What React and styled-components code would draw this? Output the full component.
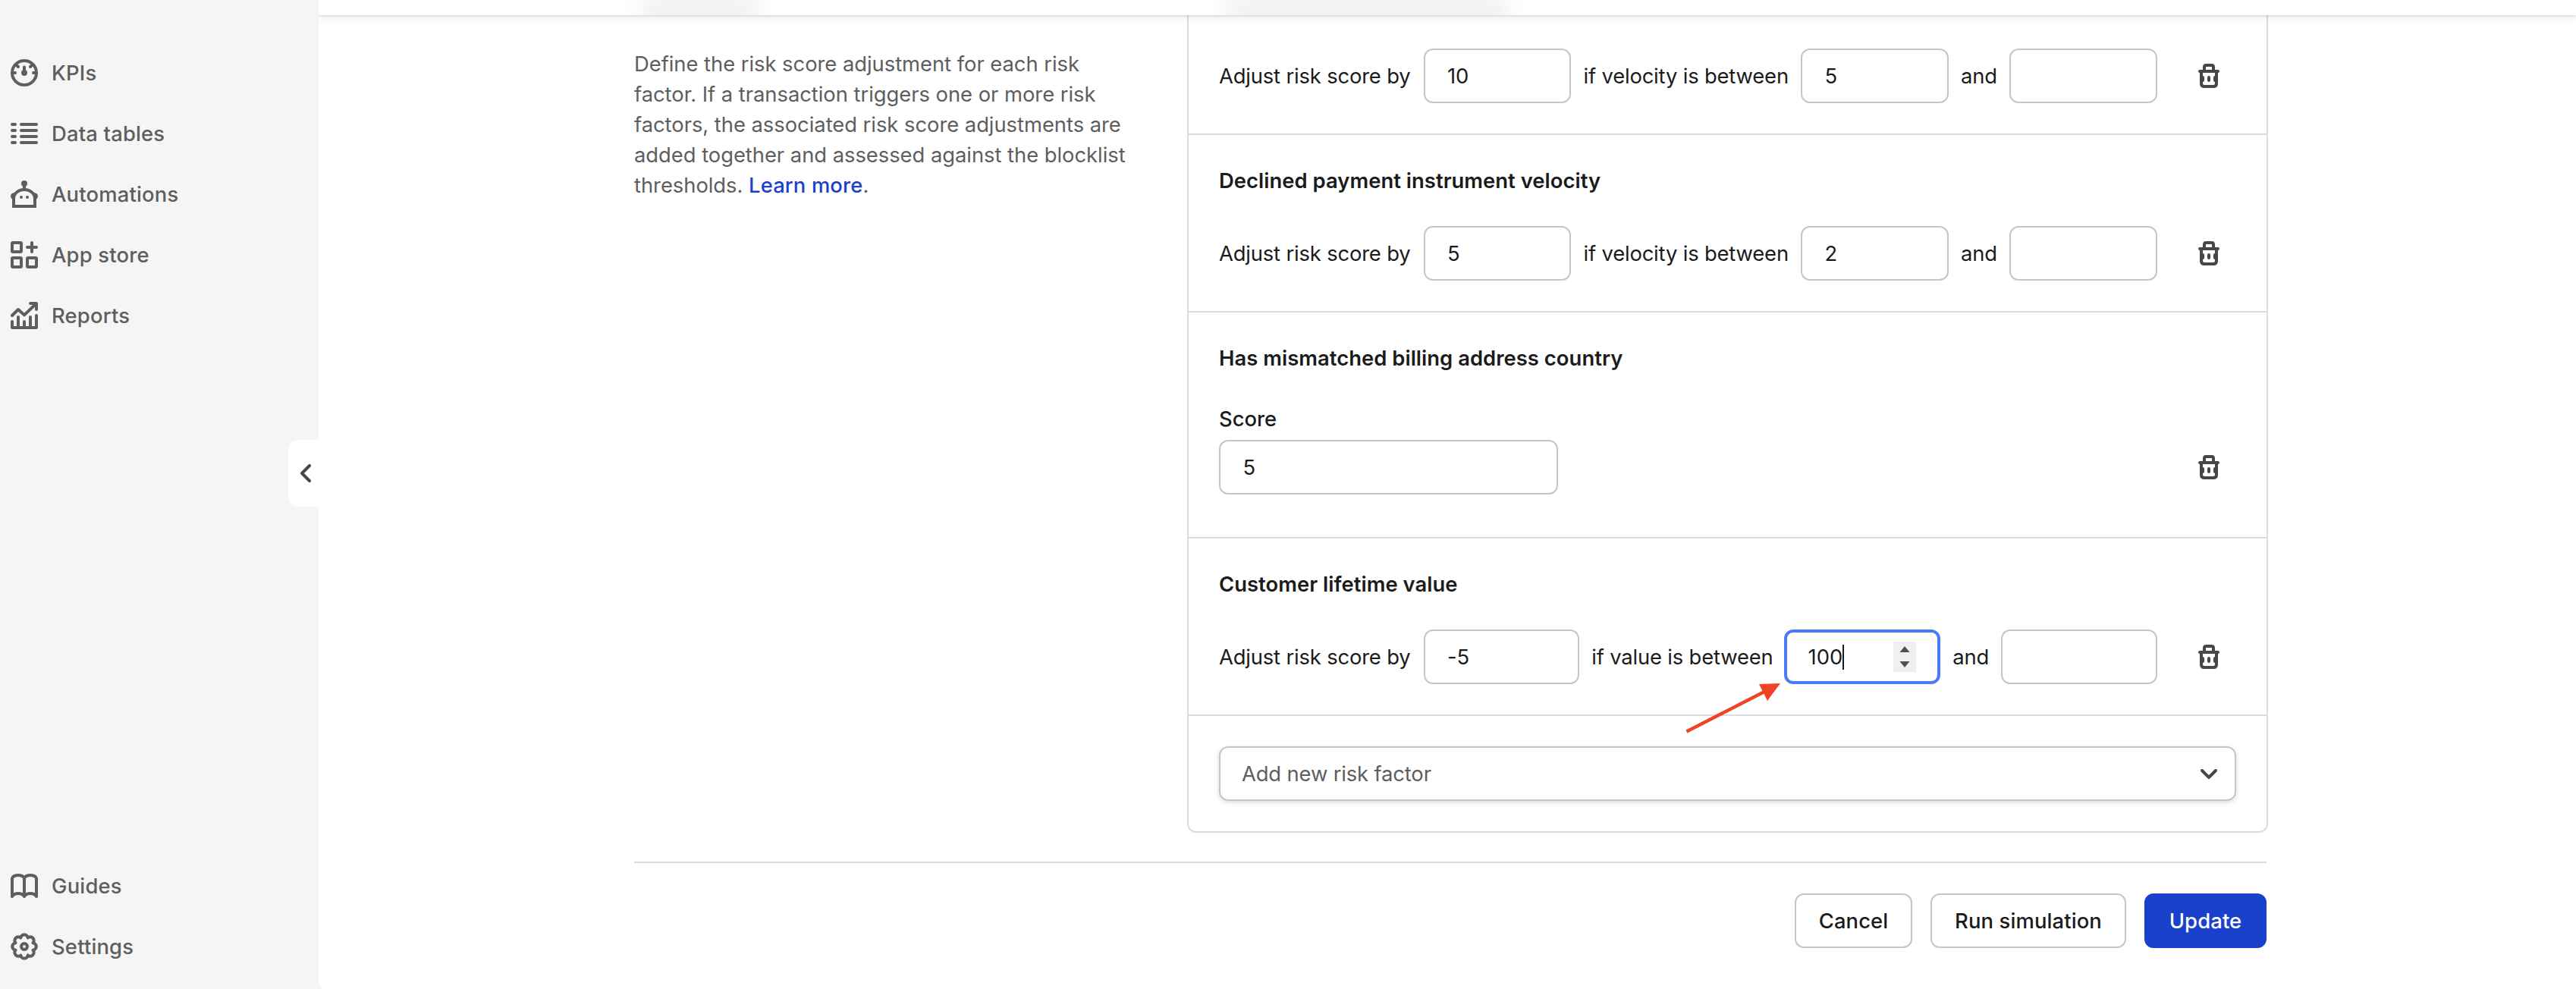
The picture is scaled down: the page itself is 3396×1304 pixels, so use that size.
import React from "react";
import styled, { createGlobalStyle } from "styled-components";

const Global = createGlobalStyle`
  *, *::before, *::after { box-sizing: border-box; }
  html, body { margin: 0; padding: 0; background: #f5f5f5; }
  body {
    font-family: Inter, "Liberation Sans", sans-serif;
    font-size: 27.4px;
    line-height: 40px;
    letter-spacing: -0.04px;
    color: #1b1b1b;
    -webkit-font-smoothing: antialiased;
  }
  button, input { font: inherit; color: inherit; letter-spacing: inherit; }
`;

const Page = styled.div`
  display: flex;
  height: 1304px;
  overflow: hidden;
  background: #f5f5f5;
`;

const Sidebar = styled.nav`
  position: relative;
  display: flex;
  flex-direction: column;
  justify-content: space-between;
  width: 420px;
  flex: none;
  padding: 56px 0 16px 14px;
`;

const NavGroup = styled.div`
  display: flex;
  flex-direction: column;
`;

const NavItem = styled.a`
  display: flex;
  align-items: center;
  gap: 18px;
  height: 80px;
  color: #5e5e5e;
  font-weight: 500;
  letter-spacing: 0.18px;
  svg { display: block; flex: none; }
`;

const CollapseTab = styled.button`
  position: absolute;
  top: 580px;
  right: 0;
  display: flex;
  align-items: center;
  width: 40px;
  height: 88px;
  padding: 0 0 0 16px;
  border: 0;
  border-radius: 12px 0 0 12px;
  background: #fff;
  color: #474747;
`;

const Main = styled.main`
  position: relative;
  flex: 1;
  height: 1308px;
  overflow: hidden;
  border-radius: 0 0 0 16px;
  background: #fff;
`;

const TopBar = styled.header`
  position: absolute;
  inset: 0 0 auto 0;
  height: 20px;
  background: #fff;
  box-shadow: 0 1px 3px rgba(0, 0, 0, 0.13), 0 4px 12px rgba(0, 0, 0, 0.07);
  display: flex;
  clip-path: inset(0 0 -20px 0);
`;

const Backdrop = styled.div`
  display: flex;
  flex: 1;
  height: 20px;
  overflow: hidden;
  padding-left: 426px;
  gap: 620px;
`;

const Smudge = styled.div`
  width: ${(p) => p.$width}px;
  height: 34px;
  margin-top: -4px;
  flex: none;
  background: #f0f0f0;
  filter: blur(12px);
`;

const Content = styled.div`
  display: flex;
  flex-direction: column;
  width: 2154px;
  margin-left: 416px;
`;

const Columns = styled.div`
  display: flex;
  justify-content: space-between;
`;

const Description = styled.p`
  margin: 0;
  width: 660px;
  padding-top: 64px;
  color: #5e5e5e;
  white-space: nowrap;
`;

const Link = styled.a`
  color: #1a41cc;
  font-weight: 500;
  letter-spacing: 0.12px;
`;

const Card = styled.section`
  width: 1425px;
  border: 2px solid #dcdcdc;
  border-top: 0;
  border-radius: 0 0 12px 12px;
`;

const Factor = styled.div`
  display: flex;
  flex-direction: column;
  gap: 40px;
  padding: ${(p) => (p.$first ? 64 : 40)}px 40px ${(p) => p.$bottom || 40}px;
  border-bottom: 2px solid #dcdcdc;
`;

const FactorTitle = styled.h3`
  margin: 0;
  font-size: inherit;
  line-height: 40px;
  font-weight: 600;
  letter-spacing: 0.04px;
`;

const Row = styled.div`
  display: flex;
  align-items: ${(p) => (p.$end ? "flex-end" : "center")};
  justify-content: space-between;
  gap: 32px;
`;

const Sentence = styled.div`
  display: flex;
  flex: 1;
  align-items: center;
  gap: 16px;
  white-space: nowrap;
`;

const Phrase = styled.span`
  flex: none;
  width: ${(p) => p.$width}px;
  letter-spacing: -0.17px;
`;

const Field = styled.label`
  display: flex;
  flex-direction: column;
  gap: 8px;
  width: 447px;
  font-weight: 500;
`;

const Box = styled.div`
  display: flex;
  align-items: center;
  flex: ${(p) => (p.$fixed ? "none" : "1 1 0")};
  min-width: 0;
  height: 72px;
  padding: 0 ${(p) => (p.$focus ? 28 : 29.5)}px;
  border: ${(p) => (p.$focus ? "4px solid #4b7af5" : "2px solid #c6c6c6")};
  border-radius: 12px;
  background: #fff;
  font-weight: 400;
`;

const Caret = styled.span`
  width: 2px;
  height: 33px;
  background: #1b1b1b;
`;

const Stepper = styled.div`
  display: flex;
  flex-direction: column;
  align-items: center;
  justify-content: space-between;
  width: 30px;
  height: 40px;
  margin-left: auto;
  padding: 6px 0;
  background: #f0f0f0;
  color: #505050;
  svg { display: block; }
`;

const IconButton = styled.button`
  display: flex;
  align-items: center;
  justify-content: center;
  width: 72px;
  height: 72px;
  flex: none;
  padding: 0;
  border: 0;
  background: none;
  color: #474747;
`;

const SelectWrap = styled.div`
  padding: 40px;
`;

const Select = styled.div`
  display: flex;
  align-items: center;
  justify-content: space-between;
  height: 72px;
  padding: 0 23px 0 28px;
  border: 2px solid #c6c6c6;
  border-radius: 12px;
  color: #5e5e5e;
  letter-spacing: -0.15px;
  box-shadow: 0 2px 6px rgba(0, 0, 0, 0.15);
  svg { color: #474747; }
`;

const Divider = styled.hr`
  width: 2152px;
  height: 2px;
  margin: 38px 0 40px;
  border: 0;
  background: #dcdcdc;
`;

const Actions = styled.div`
  display: flex;
  justify-content: flex-end;
  gap: 24px;
  width: 2152px;
`;

const Button = styled.button`
  width: ${(p) => p.$width}px;
  height: 72px;
  padding: 0;
  border: 2px solid ${(p) => (p.$primary ? "#1a41cc" : "#c6c6c6")};
  border-radius: 12px;
  background: ${(p) => (p.$primary ? "#1a41cc" : "#fff")};
  color: ${(p) => (p.$primary ? "#fff" : "#1b1b1b")};
  font-weight: 500;
  letter-spacing: 0.12px;
  white-space: nowrap;
`;

const Annotation = styled.svg`
  position: absolute;
  left: 1800px;
  top: 890px;
  pointer-events: none;
`;

const Glyph = ({ w = 18, h = 18, children }) => (
  <svg width={w * 2} height={h * 2} viewBox={`0 0 ${w} ${h}`} fill="none" stroke="currentColor" strokeWidth="2" strokeLinecap="round" strokeLinejoin="round">
    {children}
  </svg>
);

const GaugeIcon = () => (
  <Glyph>
    <circle cx="9" cy="9" r="8" />
    <circle cx="9" cy="9" r="2" fill="currentColor" stroke="none" />
    <path d="M9 5.3V9M2 9h1M15 9h1M4.2 4.2l.8.8M13.8 4.2l-.8.8" />
  </Glyph>
);

const ListIcon = () => (
  <Glyph>
    <path d="M1 3h2M7 3h10M1 7h2M7 7h10M1 11h2M7 11h10M1 15h2M7 15h10" />
  </Glyph>
);

const RobotIcon = () => (
  <Glyph>
    <circle cx="9" cy="2" r="2" fill="currentColor" stroke="none" />
    <path d="M9 2v4" />
    <path d="M2 17v-5c0-3.4 3.1-6 7-6s7 2.6 7 6v5z" strokeLinejoin="miter" />
    <path d="M3.4 8C1.5 7.8 0 8.7 0 10.3c0 1.4 1 2.3 2.4 2.4zM14.6 8c1.9-.2 3.4.7 3.4 2.3 0 1.4-1 2.3-2.4 2.4z" fill="currentColor" stroke="none" />
    <circle cx="7" cy="11" r="1" fill="currentColor" stroke="none" />
    <circle cx="11" cy="11" r="1" fill="currentColor" stroke="none" />
  </Glyph>
);

const AppsIcon = () => (
  <Glyph>
    <rect x="1" y="1" width="6" height="6" rx="0.6" />
    <rect x="1" y="11" width="6" height="6" rx="0.6" />
    <rect x="11" y="11" width="6" height="6" rx="0.6" />
    <path d="M14 1v6M11 4h6" />
  </Glyph>
);

const ChartIcon = () => (
  <Glyph>
    <path d="M1 9l4-4 4 3.7L16.5 1.5M13 1h4v4" />
    <path d="M1 13v4h16V9M5 10v7M9 13v4M13 10v7" />
  </Glyph>
);

const BookIcon = () => (
  <Glyph>
    <path d="M1 16V4c1.2-2.6 6.8-2.6 8 0 1.2-2.6 6.8-2.6 8 0v12c-1.6-2.6-6.4-2.6-8 0-1.6-2.6-6.4-2.6-8 0zM9 4v12" />
  </Glyph>
);

const gearPath = (() => {
  const pts = Array.from({ length: 8 }, (_, i) => {
    const a = ((i * 45 + 22.5) * Math.PI) / 180;
    return `${(9 + 6.2 * Math.cos(a)).toFixed(2)} ${(9 + 6.2 * Math.sin(a)).toFixed(2)}`;
  });
  return `M${pts[7]}` + pts.map((p) => `A2.38 2.38 0 0 1 ${p}`).join("") + "Z";
})();

const GearIcon = () => (
  <Glyph>
    <path d={gearPath} />
    <circle cx="9" cy="9" r="2" />
  </Glyph>
);

const TrashIcon = () => (
  <Glyph w={14} h={16}>
    <path d="M4 5V2.2Q4 1 5.2 1h3.6Q10 1 10 2.2V5M1 5h12" />
    <path d="M2 5v8q0 2 2 2h6q2 0 2-2V5M3 9v2M7 9v2M11 9v2" />
  </Glyph>
);

const ChevronLeft = () => (
  <Glyph w={7} h={12}>
    <path d="M6 1L1 6l5 5" />
  </Glyph>
);

const ChevronDown = () => (
  <Glyph w={11} h={6.5}>
    <path d="M1 1l4.5 4.5L10 1" />
  </Glyph>
);

const Triangle = ({ down }) => (
  <svg width="14" height="8" viewBox="0 0 14 8" fill="currentColor">
    <path d={down ? "M0.5 0h13L7 8z" : "M0.5 8h13L7 0z"} />
  </svg>
);

const mainNav = [
  ["KPIs", GaugeIcon],
  ["Data tables", ListIcon],
  ["Automations", RobotIcon],
  ["App store", AppsIcon],
  ["Reports", ChartIcon],
];

const footerNav = [
  ["Guides", BookIcon],
  ["Settings", GearIcon],
];

const NavList = ({ items }) => (
  <NavGroup>
    {items.map(([label, Icon]) => (
      <NavItem key={label}>
        <Icon />
        {label}
      </NavItem>
    ))}
  </NavGroup>
);

const Delete = () => (
  <IconButton aria-label="Delete">
    <TrashIcon />
  </IconButton>
);

const RangeRow = ({ score, subject, subjectWidth, from, focused }) => (
  <Row>
    <Sentence>
      <Phrase $width={253.5}>Adjust risk score by</Phrase>
      <Box>{score}</Box>
      <Phrase $width={subjectWidth}>if {subject} is between</Phrase>
      <Box $focus={focused}>
        {from}
        {focused && (
          <>
            <Caret />
            <Stepper>
              <Triangle />
              <Triangle down />
            </Stepper>
          </>
        )}
      </Box>
      <Phrase $width={48}>and</Phrase>
      <Box />
    </Sentence>
    <Delete />
  </Row>
);

export default function App() {
  return (
    <Page>
      <Global />
      <Sidebar>
        <NavList items={mainNav} />
        <NavList items={footerNav} />
        <CollapseTab aria-label="Collapse">
          <ChevronLeft />
        </CollapseTab>
      </Sidebar>
      <Main>
        <Content>
          <Columns>
            <Description>
              Define the risk score adjustment for each risk
              <br />
              factor. If a transaction triggers one or more risk
              <br />
              factors, the associated risk score adjustments are
              <br />
              added together and assessed against the blocklist
              <br />
              thresholds. <Link>Learn more</Link>.
            </Description>
            <Card>
              <Factor $first>
                <RangeRow score="10" subject="velocity" subjectWidth={270.6} from="5" />
              </Factor>
              <Factor>
                <FactorTitle>Declined payment instrument velocity</FactorTitle>
                <RangeRow score="5" subject="velocity" subjectWidth={270.6} from="2" />
              </Factor>
              <Factor $bottom={56}>
                <FactorTitle>Has mismatched billing address country</FactorTitle>
                <Row $end>
                  <Field>
                    Score
                    <Box $fixed>5</Box>
                  </Field>
                  <Delete />
                </Row>
              </Factor>
              <Factor>
                <FactorTitle>Customer lifetime value</FactorTitle>
                <RangeRow score="-5" subject="value" subjectWidth={237.4} from="100" focused />
              </Factor>
              <SelectWrap>
                <Select>
                  Add new risk factor
                  <ChevronDown />
                </Select>
              </SelectWrap>
            </Card>
          </Columns>
          <Divider />
          <Actions>
            <Button $width={155}>Cancel</Button>
            <Button $width={258}>Run simulation</Button>
            <Button $width={161} $primary>Update</Button>
          </Actions>
        </Content>
        <TopBar>
          <Backdrop>
            <Smudge $width={152} />
            <Smudge $width={370} />
          </Backdrop>
        </TopBar>
        <Annotation width="140" height="84" viewBox="2220 890 140 84">
          <path d="M2223.5 964.5L2328 911" stroke="#ee4426" strokeWidth="4.5" />
          <path d="M2319 902L2347 901L2330 924Z" fill="#ee4426" />
        </Annotation>
      </Main>
    </Page>
  );
}
